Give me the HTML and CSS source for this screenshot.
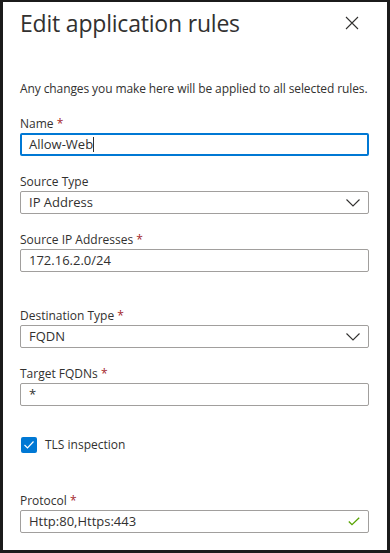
FILE: index.html
```html
<!DOCTYPE html>
<html lang="en">
<head>
    <meta charset="UTF-8">
    <meta name="viewport" content="width=device-width, initial-scale=1.0">
    <title>Edit application rules</title>
    <link rel="stylesheet" href="styles.css">
</head>
<body>
    <div class="panel">
        <div class="panel-header">
            <h1>Edit application rules</h1>
            <button class="close-btn" aria-label="Close">
                <svg width="14" height="14" viewBox="0 0 14 14"><path d="M1 1 L13 13 M13 1 L1 13" stroke="#323130" stroke-width="1.1" fill="none"/></svg>
            </button>
        </div>

        <p class="description">Any changes you make here will be applied to all selected rules.</p>

        <div class="field">
            <label>Name <span class="required">*</span></label>
            <div class="input focused">Allow-Web<span class="caret"></span></div>
        </div>

        <div class="field">
            <label>Source Type</label>
            <div class="input select">
                <span>IP Address</span>
                <svg class="chevron" width="14" height="8" viewBox="0 0 14 8"><path d="M0.5 0.5 L7 7 L13.5 0.5" stroke="#323130" stroke-width="1.1" fill="none"/></svg>
            </div>
        </div>

        <div class="field">
            <label>Source IP Addresses <span class="required">*</span></label>
            <div class="input">172.16.2.0/24</div>
        </div>

        <div class="field field-spaced">
            <label>Destination Type <span class="required">*</span></label>
            <div class="input select">
                <span>FQDN</span>
                <svg class="chevron" width="14" height="8" viewBox="0 0 14 8"><path d="M0.5 0.5 L7 7 L13.5 0.5" stroke="#323130" stroke-width="1.1" fill="none"/></svg>
            </div>
        </div>

        <div class="field">
            <label>Target FQDNs <span class="required">*</span></label>
            <div class="input">*</div>
        </div>

        <div class="checkbox-row">
            <span class="checkbox">
                <svg width="12" height="10" viewBox="0 0 12 10"><path d="M1.5 5 L4.5 8 L10.5 1.5" stroke="#fff" stroke-width="1.2" fill="none"/></svg>
            </span>
            <span>TLS inspection</span>
        </div>

        <div class="field">
            <label>Protocol <span class="required">*</span></label>
            <div class="input select">
                <span>Http:80,Https:443</span>
                <svg class="valid" width="12" height="9" viewBox="0 0 12 9"><path d="M0.8 4.5 L4 7.7 L11.2 0.8" stroke="#57a300" stroke-width="1.3" fill="none"/></svg>
            </div>
        </div>
    </div>
</body>
</html>
```

FILE: styles.css
```css
* {
    box-sizing: border-box;
}

body {
    margin: 0;
    font-family: 'Open Sans', 'Noto Sans', Arial, sans-serif;
    color: #323130;
    background: #fff;
}

.panel {
    width: 390px;
    height: 553px;
    border: 3px solid #1b1b1b;
    border-top-width: 2px;
    padding: 0 18px 0 17px;
    overflow: hidden;
}

.panel-header {
    display: flex;
    justify-content: space-between;
    align-items: center;
    height: 40px;
    padding-top: 2px;
}

h1 {
    margin: 0;
    font-size: 23px;
    font-weight: 400;
    letter-spacing: -0.2px;
}

.close-btn {
    background: none;
    border: none;
    padding: 0;
    margin-right: 10px;
    width: 14px;
    height: 14px;
    display: flex;
}

.description {
    margin: 38px -6px 0 0;
    font-size: 12px;
    line-height: 18px;
    letter-spacing: -0.1px;
    white-space: nowrap;
}

.field {
    margin-top: 17px;
}

.field-spaced {
    margin-top: 35px;
}

label {
    display: block;
    font-size: 12px;
    line-height: 18px;
    margin-bottom: 0;
}

.required {
    color: #a4262c;
}

.input {
    height: 23px;
    border: 1px solid #a19f9d;
    border-radius: 2px;
    padding: 0 8px;
    font-size: 13px;
    line-height: 21px;
    display: flex;
    align-items: center;
}

.input.focused {
    border: 2px solid #0078d4;
    padding: 0 7px;
}

.caret {
    width: 1px;
    height: 15px;
    background: #323130;
}

.select {
    justify-content: space-between;
}

.checkbox-row {
    display: flex;
    align-items: center;
    gap: 8px;
    margin-top: 30px;
    margin-left: 1px;
    font-size: 12px;
}

.checkbox {
    width: 16px;
    height: 16px;
    border-radius: 2px;
    background: #0078d4;
    display: flex;
    align-items: center;
    justify-content: center;
}

.checkbox-row + .field {
    margin-top: 39px;
}
```
